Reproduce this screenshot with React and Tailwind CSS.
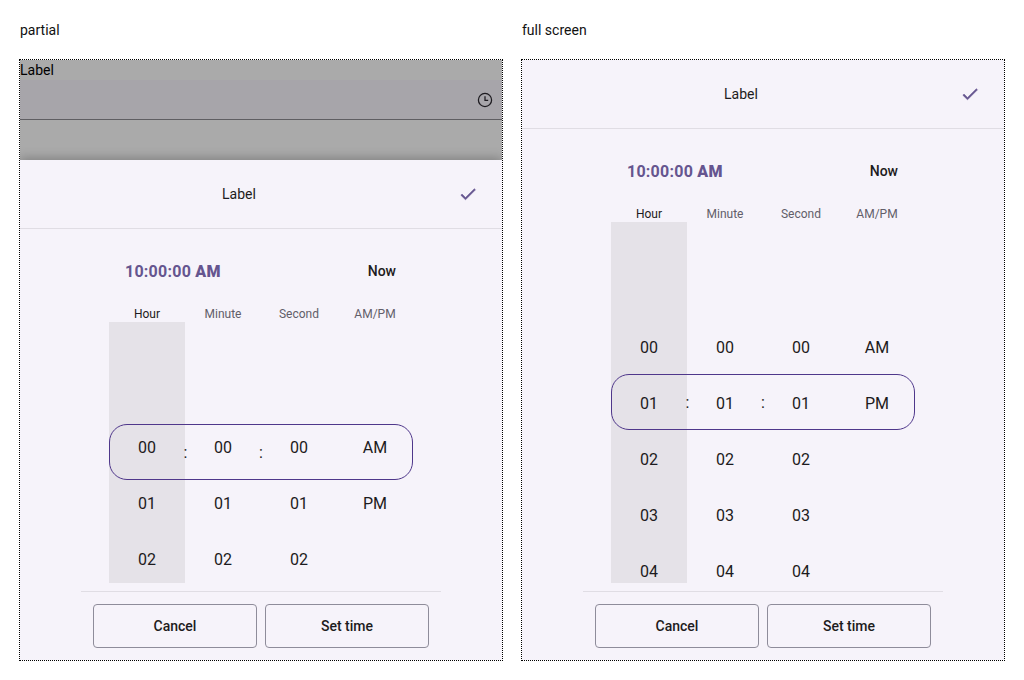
const COLUMNS = [
  { title: "Hour", items: ["00", "01", "02", "03", "04"], active: true },
  { title: "Minute", items: ["00", "01", "02", "03", "04"] },
  { title: "Second", items: ["00", "01", "02", "03", "04"] },
  { title: "AM/PM", items: ["AM", "PM"] },
];

const CheckIcon = () => (
  <svg width="20" height="20" viewBox="0 0 24 24" fill="#65558f" stroke="#65558f" strokeWidth="0.6">
    <path d="M9 16.17L4.83 12l-1.42 1.41L9 19 21 7l-1.41-1.41z" />
  </svg>
);

const ClockIcon = () => (
  <svg width="16" height="16" viewBox="0 0 16 16" fill="none" stroke="#1d1b20" strokeWidth="1.25">
    <circle cx="8" cy="8" r="6.6" />
    <path d="M8 4.2V8.4H11.2" />
  </svg>
);

const TimeSheet = ({ columnsHeight, boxClass, rows, shadow }) => (
  <div className={`flex flex-1 flex-col bg-[#f6f3fa] ${shadow}`}>
    <div className="flex h-[69px] items-center border-b border-[#e0dde4]">
      <div className="flex-1 text-center text-sm text-[#1d1b20]">Label</div>
      <div className="flex w-[44px] shrink-0">
        <CheckIcon />
      </div>
    </div>

    <div className="mx-auto w-[304px]">
      <div className="flex items-center justify-between pt-[31px] pr-[17px] pb-[22px] pl-4">
        <span className="block h-[22px] pt-px text-base leading-[22px] font-bold tracking-[0.25px] text-[#65558f]">
          10:00:00 <span className="font-black">AM</span>
        </span>
        <span className="text-sm leading-[22px] font-medium text-[#1d1b20]">Now</span>
      </div>

      <div className="relative">
        <div className="grid h-[18px] grid-cols-4">
          {COLUMNS.map((col) => (
            <div
              key={col.title}
              className={`text-center text-xs leading-5 ${col.active ? "text-[#1d1b20]" : "text-[#625e69]"}`}
            >
              {col.title}
            </div>
          ))}
        </div>
        <div className={`grid grid-cols-4 overflow-hidden ${columnsHeight}`}>
          {COLUMNS.map((col) => (
            <div key={col.title} className={`pt-[98px] ${col.active ? "bg-[#e5e2e8]" : ""}`}>
              {col.items.slice(0, rows).map((item) => (
                <div
                  key={item}
                  className="flex h-14 items-center justify-center text-base text-[#1d1b20]"
                >
                  {item}
                </div>
              ))}
            </div>
          ))}
        </div>
        <div
          className={`absolute inset-x-0 grid h-14 grid-cols-4 rounded-[18px] border border-[#4f378b] ${boxClass}`}
        >
          {[0, 1].map((i) => (
            <div key={i} className="relative">
              <span className="absolute top-4 right-0 translate-x-1/2 text-base text-[#1d1b20]">:</span>
            </div>
          ))}
        </div>
      </div>
    </div>

    <div className="mx-auto mt-2 w-[360px] border-t border-[#e0dde4] p-3">
      <div className="flex gap-2">
        {["Cancel", "Set time"].map((label) => (
          <button
            key={label}
            className="h-11 flex-1 rounded border border-[#8e8c9a] text-sm font-medium text-[#1d1b20]"
          >
            {label}
          </button>
        ))}
      </div>
    </div>
  </div>
);

const Frame = ({ title, children }) => (
  <div className="w-[484px]">
    <div className="mb-[19px] pl-px text-sm leading-5 text-[#111]">{title}</div>
    <div className="flex h-[602px] flex-col overflow-hidden border border-dotted border-black">{children}</div>
  </div>
);

export default function App() {
  return (
    <div className="flex h-[680px] gap-[18px] bg-white pt-5 pl-[19px] [font-family:Roboto,sans-serif]">
      <Frame title="partial">
        <div className="h-[100px] shrink-0 bg-[#aaaaaa]">
          <div className="h-5 text-sm leading-5 text-black">Label</div>
          <div className="flex h-10 items-center justify-end border-b border-[#5f5e62] bg-[#a7a5aa] pr-[9px]">
            <ClockIcon />
          </div>
        </div>
        <TimeSheet
          columnsHeight="h-[261px]"
          boxClass="top-[120px]"
          rows={3}
          shadow="shadow-[0_-2px_10px_rgba(0,0,0,0.25)]"
        />
      </Frame>
      <Frame title="full screen">
        <TimeSheet columnsHeight="h-[361px]" boxClass="top-[170px]" rows={5} shadow="" />
      </Frame>
    </div>
  );
}
